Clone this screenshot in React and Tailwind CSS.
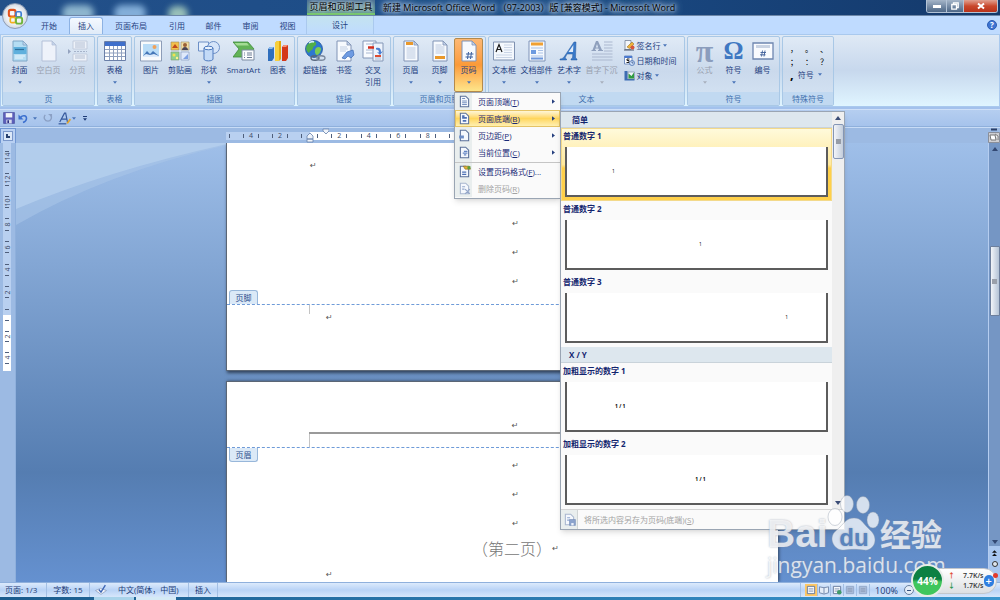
import React from 'react';

/* ---------- icons ---------- */

function Svg({ size = 22, children }) {
  return (
    <svg viewBox="0 0 22 22" width={size} height={size} fill="none" aria-hidden="true">
      {children}
    </svg>
  );
}

// sheet with a folded corner, shared by most of the icons
function Sheet({ fill = '#f7fafe', stroke = '#8093b5', x = 0 }) {
  return (
    <g transform={`translate(${x} 0)`}>
      <path d="M4 1h10l4 4v16H4z" fill={fill} stroke={stroke} />
      <path d="M14 1v4h4z" fill="#c4d3ea" stroke={stroke} strokeWidth=".8" />
    </g>
  );
}

const icons = {
  cover: (
    <Svg>
      <Sheet fill="#b5ddf3" stroke="#7fa6c6" />
      <path d="M4.500 7h13v7h-13z" fill="#5fb0dd" />
      <path d="M6 9.500h9" stroke="#2c6f9c" strokeWidth="1.200" />
      <path d="M6 16h10M6 18h8" stroke="#e9f6fd" />
    </Svg>
  ),
  blank: <Svg><Sheet stroke="#b3c0d8" fill="#eef2fa" /></Svg>,
  pageBreak: (
    <Svg>
      <path d="M6 1h14v8H6zM6 14h14v7H6z" fill="#eef2f9" stroke="#c1cbdc" />
      <path d="M8 3h10M8 5h10M8 7h10M8 16h10M8 18h10" stroke="#b4c0d4" />
      <path d="M1 9l3 2.500-3 2.500z" fill="#94a3bf" />
      <path d="M7 11.500h13" stroke="#a6b3ca" strokeDasharray="2 1" />
    </Svg>
  ),
  table: (
    <Svg>
      <path d="M.5 1.500h21v19H.5z" fill="#fff" stroke="#6a7fa8" />
      <path d="M1 2h20v4H1z" fill="#3f6fcb" />
      <path d="M1 9.500h20M1 13h20M1 16.500h20M5.500 6v14M9.500 6v14M13.500 6v14M17.500 6v14" stroke="#8fa0bf" />
    </Svg>
  ),
  picture: (
    <Svg>
      <path d="M.5 1h21v20H.5z" fill="#f8fafc" stroke="#8d9db8" />
      <path d="M3 4h16v13H3z" fill="#b9dcf7" />
      <circle cx="14.500" cy="7" r="2" fill="#f0a25a" />
      <path d="M3 16l4-5 3 3 3-3 6 5z" fill="#4577b8" />
      <path d="M3 16l3-2 4 1 4-1 5 2v1H3z" fill="#dceafa" />
    </Svg>
  ),
  clipart: (
    <Svg>
      <path d="M2 2h8v8H2z" fill="#f2c04c" stroke="#9c8a63" strokeWidth=".6" />
      <path d="M3 8l3-4 3 4z" fill="#bf4a1e" />
      <path d="M12 2h8v8h-8z" fill="#f3dfa5" stroke="#9c8a63" strokeWidth=".6" />
      <circle cx="16" cy="5" r="2" fill="#9a6038" />
      <path d="M13 10c0-4 6-4 6 0z" fill="#4a4455" />
      <path d="M2 12h8v8H2z" fill="#8fcf8b" stroke="#7e9b76" strokeWidth=".6" />
      <circle cx="5" cy="15" r="1.500" fill="#f4e14d" />
      <circle cx="8" cy="18" r="1.200" fill="#fff28c" />
      <path d="M12 12h8v8h-8z" fill="#dfe9fb" stroke="#7f93b8" strokeWidth=".6" />
      <path d="M14 19l5-5v5z" fill="#7ea1e4" />
    </Svg>
  ),
  shapes: (
    <Svg>
      <path d="M.5 2h10v9H.5z" fill="#e4eefb" stroke="#6c8fc6" />
      <circle cx="15.500" cy="7.500" r="6" fill="#d5e4f9" stroke="#6c8fc6" />
      <path d="M6 8v11c0 2.500 9 2.500 9 0V8" fill="#c3daf7" stroke="#4c78bd" />
      <ellipse cx="10.500" cy="8" rx="4.500" ry="1.800" fill="#e9f2fd" stroke="#4c78bd" />
    </Svg>
  ),
  smartart: (
    <Svg>
      <path d="M0 2h15l6 7-6 8H0l6-8z" fill="#62b357" stroke="#3d8a3b" strokeWidth=".8" />
      <path d="M1.500 3H14l2 2.500H4z" fill="#a3dc94" />
      <path d="M9 10h12v10H9z" fill="#fbfcfe" stroke="#7d8ca3" />
      <path d="M11 13h1M14 13h5M11 15h1M14 15h5M11 17.500h1M14 17.500h5" stroke="#6d7c95" />
    </Svg>
  ),
  chart: (
    <Svg>
      <path d="M1 9l2-2h4v11l-2 3H1z" fill="#2f6fbd" />
      <path d="M1 9l2-2h4l-2 2z" fill="#8cbcf0" />
      <path d="M8 3l2-2h4v18l-2 2H8z" fill="#e5a90d" />
      <path d="M8 3l2-2h2v20H8z" fill="#f8cf3c" />
      <path d="M15 7l2-2h4v13l-2 3h-4z" fill="#d4391b" />
      <path d="M15 7l2-2h4l-2 2z" fill="#f79277" />
    </Svg>
  ),
  hyperlink: (
    <Svg>
      <circle cx="10" cy="9" r="8.500" fill="#2d78d0" stroke="#23549a" strokeWidth=".8" />
      <path d="M4 4c3-3 7-3 8-1 1 3-3 3-3 5s-3 2-4 5C2 11 1 7 4 4z" fill="#50ae49" />
      <path d="M12 8c2-2 5-1 5 1s-2 6-4 6-3-5-1-7z" fill="#7acb55" />
      <path d="M5 3c2-1.500 4-1.500 5-1" stroke="#d4efff" strokeWidth="1.500" />
      <ellipse cx="11" cy="18" rx="4" ry="2.200" stroke="#56657c" strokeWidth="1.400" />
      <ellipse cx="17" cy="18" rx="4" ry="2.200" stroke="#7a899e" strokeWidth="1.400" />
    </Svg>
  ),
  bookmark: (
    <Svg>
      <Sheet />
      <path d="M7 7h7M7 9h8M7 11h6" stroke="#c2cfe3" />
      <path d="M9 18l5-6 6-2 1 5-3 3-3-2-3 3z" fill="#6e9be2" stroke="#3c6cb5" strokeWidth=".7" />
    </Svg>
  ),
  crossref: (
    <Svg>
      <path d="M1 1h13v17H1z" fill="#f9fbfe" stroke="#8497b7" />
      <path d="M11 3h10v18H11z" fill="#edf3fc" stroke="#8497b7" />
      <path d="M4 4h8M4 10h7M4 13h7M13 17h6M13 19h6" stroke="#a8b7d0" />
      <path d="M6 7.500h6" stroke="#d32b1a" strokeWidth="2.500" />
      <path d="M13 16h6" stroke="#df4c2f" strokeWidth="2" />
      <path d="M14 8c4-1 5 1 5 4l2-1-3 4-3-3 2 .5c0-2-1-3-3-3z" fill="#4b7fd1" />
    </Svg>
  ),
  header: (
    <Svg>
      <Sheet />
      <path d="M6 3.500h7" stroke="#e9982b" strokeWidth="3" />
      <path d="M6.500 8h9M6.500 10h9M6.500 12h9M6.500 14h9M6.500 16h9M6.500 18h9" stroke="#bccae0" />
    </Svg>
  ),
  footer: (
    <Svg>
      <Sheet />
      <path d="M6.500 5h6M6.500 7h9M6.500 9h9M6.500 11h9M6.500 13h9" stroke="#bccae0" />
      <path d="M6 17.500h10" stroke="#e9982b" strokeWidth="3" />
    </Svg>
  ),
  pageNumber: (
    <Svg>
      <Sheet />
      <path d="M10.500 12l-1 7M13.500 12l-1 7M8 14h7.500M7.500 17H15" stroke="#3a5f9d" />
    </Svg>
  ),
  textbox: (
    <Svg>
      <path d="M.5 2h21v18H.5z" fill="#f4f8fd" stroke="#7f91b0" />
      <path d="M11 5h8M11 7.500h8M3 15h16M3 17.500h16M11 10h8M11 12.500h8" stroke="#c9d4e6" />
      <path d="M3 12l3-7.500L9 12M4 9.500h4" stroke="#1b1b1b" strokeWidth="1.200" />
    </Svg>
  ),
  quickparts: (
    <Svg>
      <path d="M3 1h16v20H3z" fill="#f5f9fe" stroke="#7f93b8" />
      <path d="M5 4h12" stroke="#f0a033" strokeWidth="3" />
      <path d="M5 8h12M12 10.500h5M12 13h5M5 16h12" stroke="#a9c1e6" />
      <path d="M5 10h5v4H5z" fill="#6c9ae0" />
      <path d="M5 18.500h12" stroke="#6d97db" strokeWidth="2" />
    </Svg>
  ),
  wordart: (
    <Svg>
      <path d="M2 19c3 0 4-2 6-5l8-12h2l-.5 16 1.500 1v1h-6v-1l1.500-1 .3-4H9l-2 4 1.500 1v1H2z" fill="#3979c9" stroke="#265a9f" strokeWidth=".5" />
      <path d="M10.500 12h4.500l.4-7z" fill="#dfebf9" />
    </Svg>
  ),
  dropcap: (
    <Svg>
      <path d="M5 1h2l4 9h1v1H7v-1h1L7.500 8.500h-3L4 10h1v1H.5v-1h1zM6 4L4.800 7.500h2.400z" fill="#8fa0bd" fillRule="evenodd" />
      <path d="M13 2h8.500M13 5h8.500M13 8h8.500M13 11h8.500M1 14h20.500M1 17h20.500M1 20h20.500" stroke="#abb8cf" />
    </Svg>
  ),
  numbering: (
    <Svg>
      <path d="M1 3h20v16H1z" fill="#f9fbfe" stroke="#6e86b0" strokeWidth="1.300" />
      <path d="M4 6.500h14" stroke="#c9d3e3" strokeWidth="3" />
      <path d="M10.500 10.500l-1 6M13 10.500l-1 6M8.500 12.500H14M8 14.800h5.500" stroke="#3e5f99" strokeWidth=".9" />
    </Svg>
  ),
  signature: (
    <Svg size={11}>
      <path d="M2 1h12v18H2z" fill="#f3f6fa" stroke="#6f7c94" strokeWidth="1.500" />
      <path d="M0 20h20" stroke="#4b5568" strokeWidth="2" />
      <path d="M6 14L16 4l4 4-9 9z" fill="#efb33a" stroke="#8b621a" />
      <circle cx="17" cy="15" r="4" fill="#d7553a" />
    </Svg>
  ),
  date: (
    <Svg size={11}>
      <path d="M1 2h15v16H1z" fill="#fff" stroke="#5273b0" strokeWidth="1.500" />
      <path d="M1 4h15" stroke="#4b7ad0" strokeWidth="4" />
      <path d="M11 8H6v3h4v4H5" stroke="#222" strokeWidth="2" />
      <circle cx="16" cy="16" r="5" fill="#cfe1fa" stroke="#4168ab" strokeWidth="1.500" />
      <path d="M16 13v3h3" stroke="#26477f" strokeWidth="1.500" />
    </Svg>
  ),
  object: (
    <Svg size={11}>
      <path d="M1 2h6v16h14v3H1z" fill="#3d6db3" />
      <path d="M8 4h13v14H8z" fill="#eef3f9" stroke="#5d7191" />
      <path d="M9 7l6 5 5-7v12H9z" fill="#2f9b41" />
    </Svg>
  ),
};

// small glyphs of the page number menu
function MenuIcon({ kind }) {
  const faded = kind === 'remove' || kind === 'save';
  const stroke = faded ? '#a9b7cf' : '#5b7099';
  return (
    <Svg size={13}>
      <path d="M4 2h9l5 5v13H4z" fill="#f5f8fd" stroke={stroke} strokeWidth="1.800" />
      {kind === 'top' && <path d="M7 6h5M7 10h8M7 13h8M7 16h8" stroke="#7690c0" strokeWidth="1.800" />}
      {kind === 'bottom' && <path d="M7 7h4M7 10h8M8 15h6" stroke="#4c6fb4" strokeWidth="3" />}
      {kind === 'margin' && <path d="M2 11h8v5H2z" fill="#6d8dc6" />}
      {kind === 'current' && <path d="M10 9h6M8 12h8M10 15h4" stroke="#6485c4" strokeWidth="2" />}
      {kind === 'format' && (
        <>
          <path d="M9 2h10l2 5h-9z" fill="#e5b436" stroke="#8f6a1a" />
          <path d="M16 2h5v5h-5z" fill="#5a9c3c" />
          <path d="M7 12h7M7 16h7" stroke="#4c6fb4" strokeWidth="2" />
        </>
      )}
      {kind === 'remove' && <path d="M7 8h5M7 12h4M12 12l8 8M20 12l-8 8" stroke="#93a6c9" strokeWidth="2" />}
      {kind === 'save' && (
        <>
          <path d="M7 8h5M7 12h4" stroke="#8ea5cf" strokeWidth="2" />
          <path d="M11 11h10v10H11z" fill="#8ba3cd" stroke="#7189b5" />
          <path d="M14 17h4v4h-4z" fill="#eef3fb" />
        </>
      )}
    </Svg>
  );
}

function Caret({ className = 'text-[#4a74b8]' }) {
  return (
    <svg viewBox="0 0 6 4" width="4" height="3" className={className} aria-hidden="true">
      <path d="M0 0h6L3 4z" fill="currentColor" />
    </svg>
  );
}

/* ---------- title bar and tabs ---------- */

function OfficeButton() {
  return (
    <button aria-label="Office" className="absolute left-[2px] top-[3px] z-20 flex size-[26px] items-center justify-center rounded-full border border-[#8d9cb4] bg-radial from-white via-[#eceff4] to-[#b4bdcb]">
      <svg viewBox="0 0 20 20" width="19" height="19" fill="none" aria-hidden="true">
        <rect x="3" y="3" width="7" height="7" rx="2" stroke="#e2531d" strokeWidth="2.200" />
        <rect x="10.500" y="5" width="5.500" height="5.500" rx="1.500" stroke="#3f7fd3" strokeWidth="1.800" />
        <rect x="4.500" y="11" width="5.500" height="5.500" rx="1.500" stroke="#f2b01e" strokeWidth="1.800" />
        <rect x="10.500" y="11" width="6.500" height="6.500" rx="2" stroke="#6fb43b" strokeWidth="2" />
      </svg>
    </button>
  );
}

function TitleBar() {
  return (
    <header className="relative flex h-4 shrink-0 items-start overflow-hidden border-b border-[#6d87a8] bg-linear-to-r from-[#235089] via-[#1b4c87] to-[#14396b]">
      {/* desktop icons showing through the glass */}
      <span className="absolute left-[62px] top-[5px] h-4 w-8 rounded-full bg-[#a9cfe0]/80 blur-[3px]" />
      <span className="absolute left-[114px] top-[5px] h-4 w-8 rounded-full bg-[#9cc7ee]/80 blur-[3px]" />
      <span className="absolute left-[168px] top-[6px] h-4 w-5 rounded-full bg-[#b6dcc4]/80 blur-[3px]" />
      <div className="relative ml-[307px] flex h-[15px] w-[68px] shrink-0 items-center justify-center border-b-2 border-[#74c46a] bg-linear-to-b from-[#4a6f94] to-[#5b9488] pb-px text-[9px] leading-none text-black">
        <span className="whitespace-nowrap [text-shadow:0_0_4px_#e6eef5,0_0_4px_#e6eef5]">页眉和页脚工具</span>
      </div>
      <h1 className="relative ml-2 whitespace-nowrap text-[9px] leading-[15px] text-black [text-shadow:0_0_3px_#b9cde4,0_0_5px_#b9cde4,0_0_8px_#b9cde4,0_0_8px_#b9cde4]">
        新建 Microsoft Office Word （97-2003）版 [兼容模式] - Microsoft Word
      </h1>
      <div className="relative ml-auto mr-[2px] flex h-[13px] overflow-hidden rounded-b-[3px] border border-t-0 border-[#b3c3d6]">
        <button aria-label="最小化" className="flex w-5 items-center justify-center border-r border-[#b3c3d6] bg-linear-to-b from-[#a5b5c8] to-[#4d6787]">
          <span className="h-[3px] w-2 bg-white" />
        </button>
        <button aria-label="还原" className="flex w-[17px] items-center justify-center border-r border-[#b3c3d6] bg-linear-to-b from-[#a5b5c8] to-[#4d6787]">
          <svg viewBox="0 0 8 8" width="8" height="8" fill="none" stroke="#fff" strokeWidth="1.300" aria-hidden="true">
            <path d="M2.500 2V.8h4.700v4.700H6M.8 2.500h4.700v4.700H.8z" />
          </svg>
        </button>
        <button aria-label="关闭" className="flex w-[33px] items-center justify-center bg-linear-to-b from-[#e0a090] via-[#c9482c] to-[#b8321a]">
          <svg viewBox="0 0 8 8" width="8" height="8" stroke="#fff" strokeWidth="2" aria-hidden="true">
            <path d="M1 1.500l6 5M7 1.500l-6 5" />
          </svg>
        </button>
      </div>
    </header>
  );
}

const tabs = [
  { name: '开始', width: 'w-10' },
  { name: '插入', width: 'w-[34px]', active: true },
  { name: '页面布局', width: 'w-14' },
  { name: '引用', width: 'w-9' },
  { name: '邮件', width: 'w-[37px]' },
  { name: '审阅', width: 'w-[37px]' },
  { name: '视图', width: 'w-[37px]' },
];

function Tabs() {
  return (
    <nav className="flex h-[18px] shrink-0 items-end bg-[#bfdbff] pl-[29px] text-[8px] leading-none text-[#1f3f80]">
      {tabs.map((tab) => (
        <button
          key={tab.name}
          className={`${tab.width} h-[17px] ${tab.active ? 'rounded-t-[3px] border border-b-0 border-[#8db2e3] bg-linear-to-b from-[#f4f9ff] to-[#e0ebf8]' : ''}`}
        >
          {tab.name}
        </button>
      ))}
      <button className="h-[18px] w-[68px] border-x border-[#aac9ee] bg-linear-to-b from-[#c4e3ef] to-[#bfdbff]">设计</button>
      <button aria-label="帮助" className="mb-1 ml-auto mr-[3px] flex size-[10px] items-center justify-center rounded-full border border-[#2d5db3] bg-[#3d74d2] text-[8px] font-bold leading-none text-white">
        ?
      </button>
    </nav>
  );
}

/* ---------- ribbon ---------- */

function Group({ label, className, children }) {
  return (
    <section className={`${className} flex h-[70px] shrink-0 flex-col rounded-[2px] border border-[#a9c8e6] bg-linear-to-b from-[#e0eaf6] via-[#cad9ec] to-[#d6e5f4]`}>
      <div className="flex grow justify-center pt-px">{children}</div>
      <h2 className="h-[13px] bg-[#c1d9f1] text-center text-[8px] leading-[13px] text-[#3f70ae]">{label}</h2>
    </section>
  );
}

function RibbonButton({ icon, label, width = 'w-[29px]', menu, disabled, active }) {
  const state = active
    ? 'border-[#b48a4c] bg-linear-to-b from-[#fdb873] via-[#fb9a38] to-[#fde58a]'
    : 'border-transparent';
  return (
    <button
      disabled={disabled}
      className={`${width} ${state} flex h-[54px] shrink-0 flex-col items-center rounded-[2px] border pt-px text-[8px] leading-3 ${disabled ? 'text-[#98a0ae]' : 'text-[#1f417f]'}`}
    >
      <span className="mb-0.5 flex h-[22px] items-center justify-center">{icon}</span>
      {label.split('\n').map((line) => (
        <span key={line} className="whitespace-nowrap">{line}</span>
      ))}
      {menu && <span className="flex h-3 items-center"><Caret className={disabled ? 'text-[#a8b0bd]' : 'text-[#4a74b8]'} /></span>}
    </button>
  );
}

function SmallButton({ icon, label, menu }) {
  return (
    <button className="flex h-[15px] items-center gap-0.5 whitespace-nowrap text-[8px] leading-none text-[#1f417f]">
      {icon}
      {label}
      {menu && <Caret />}
    </button>
  );
}

function Ribbon() {
  return (
    <div className="flex h-[73px] shrink-0 gap-[2px] border border-[#a9c9ee] bg-linear-to-b from-[#dfe9f5] via-[#c7d8ed] to-[#e0f5ff] pl-px pt-px">
      <Group label="页" className="w-[93px]">
        <RibbonButton icon={icons.cover} label="封面" menu />
        <RibbonButton icon={icons.blank} label="空白页" disabled />
        <RibbonButton icon={icons.pageBreak} label="分页" disabled />
      </Group>
      <Group label="表格" className="w-[35px]">
        <RibbonButton icon={icons.table} label="表格" menu />
      </Group>
      <Group label="插图" className="w-[161px]">
        <RibbonButton icon={icons.picture} label="图片" />
        <RibbonButton icon={icons.clipart} label="剪贴画" />
        <RibbonButton icon={icons.shapes} label="形状" menu />
        <RibbonButton icon={icons.smartart} label="SmartArt" width="w-10" />
        <RibbonButton icon={icons.chart} label="图表" />
      </Group>
      <Group label="链接" className="w-[94px]">
        <RibbonButton icon={icons.hyperlink} label="超链接" />
        <RibbonButton icon={icons.bookmark} label="书签" />
        <RibbonButton icon={icons.crossref} label={'交叉\n引用'} />
      </Group>
      <Group label="页眉和页脚" className="w-[93px]">
        <RibbonButton icon={icons.header} label="页眉" menu />
        <RibbonButton icon={icons.footer} label="页脚" menu />
        <div className="relative">
          <RibbonButton icon={icons.pageNumber} label="页码" menu active />
          <PageNumberMenu />
        </div>
      </Group>
      <Group label="文本" className="w-[197px]">
        <RibbonButton icon={icons.textbox} label="文本框" menu />
        <RibbonButton icon={icons.quickparts} label="文档部件" width="w-9" menu />
        <RibbonButton icon={icons.wordart} label="艺术字" menu />
        <RibbonButton icon={icons.dropcap} label="首字下沉" width="w-9" menu disabled />
        <div className="ml-1 flex w-[60px] flex-col items-start">
          <SmallButton icon={icons.signature} label="签名行" menu />
          <SmallButton icon={icons.date} label="日期和时间" />
          <SmallButton icon={icons.object} label="对象" menu />
        </div>
      </Group>
      <Group label="符号" className="w-[93px]">
        <RibbonButton icon={<span className="font-['Liberation_Serif',serif] text-[32px] font-bold leading-[20px] text-[#8b9dbd]">π</span>} label="公式" menu disabled />
        <RibbonButton icon={<span className="font-['Liberation_Serif',serif] text-[25px] font-bold leading-[22px] text-[#3f78c2]">Ω</span>} label="符号" menu />
        <RibbonButton icon={icons.numbering} label="编号" />
      </Group>
      <Group label="特殊符号" className="w-[52px]">
        <div className="flex w-full flex-col pl-[5px] pt-1 text-[8px] leading-[13px] text-black">
          <div className="grid grid-cols-3">
            {['，', '。', '、', '；', '：', '？'].map((mark) => (
              <button key={mark} className="pl-0.5 text-left">{mark}</button>
            ))}
          </div>
          <button className="flex items-center gap-1 pl-0.5 text-[#1f417f]">
            <b className="text-[13px] text-black">,</b>符号<Caret />
          </button>
        </div>
      </Group>
    </div>
  );
}

/* ---------- page number menu and gallery ---------- */

const menuItems = [
  { kind: 'top', text: '页面顶端', hotkey: 'T', sub: true },
  { kind: 'bottom', text: '页面底端', hotkey: 'B', sub: true, active: true },
  { kind: 'margin', text: '页边距', hotkey: 'P', sub: true },
  { kind: 'current', text: '当前位置', hotkey: 'C', sub: true },
  { kind: 'format', text: '设置页码格式', hotkey: 'F', tail: '...', divider: true },
  { kind: 'remove', text: '删除页码', hotkey: 'R', disabled: true },
];

function PageNumberMenu() {
  return (
    <div className="absolute left-0 top-full z-30 w-[107px] border border-[#9aa5b3] bg-[#fafafa] pb-px shadow-md">
      <ul className="bg-linear-to-r from-[#e9eeee] from-[17px] to-transparent to-[17px]">
        {menuItems.map((item) => (
          <li key={item.kind} className={item.divider ? 'mt-px border-t border-[#c5c5c5]' : ''}>
            <button
              disabled={item.disabled}
              className={`flex h-[17px] w-full items-center pl-0.5 pr-1 text-[8px] leading-none ${item.active ? 'border border-[#e5c365] bg-linear-to-b from-[#fff6d6] via-[#ffd65c] to-[#fff0b0]' : 'border border-transparent'} ${item.disabled ? 'text-[#a3a3a3]' : 'text-[#1b2a78]'}`}
            >
              <MenuIcon kind={item.kind} />
              <span className="ml-[7px] whitespace-nowrap">
                {item.text}(<u>{item.hotkey}</u>){item.tail}
              </span>
              {item.sub && (
                <svg viewBox="0 0 4 6" width="3" height="5" className="ml-auto" aria-hidden="true">
                  <path d="M0 0v6l4-3z" fill="#27407f" />
                </svg>
              )}
            </button>
          </li>
        ))}
      </ul>
      <Gallery />
    </div>
  );
}

function GalleryHeading({ className, children }) {
  return (
    <h3 className={`${className} h-4 border-b border-[#c9d3da] bg-[#dde7ee] text-[8px] font-bold leading-4 text-[#12246e]`}>
      {children}
    </h3>
  );
}

function GalleryItem({ name, sample, align, bold, active }) {
  return (
    <button className={`flex h-[73px] w-full flex-col border pb-[3px] text-left ${active ? 'border-[#f3d98a] bg-linear-to-b from-[#fffadb] from-0% via-[#ffe99d] via-50% to-[#ffd04a] to-55%' : 'border-transparent'}`}>
      <span className="px-px text-[8px] font-bold leading-[14px] text-[#12246e]">{name}</span>
      <span className={`${align} mx-[3px] mt-1 flex grow items-center self-stretch border-x-2 border-b-2 border-[#5c5c5c] bg-white leading-none text-black ${bold ? 'text-[5px] font-bold' : 'text-[5px]'}`}>
        {sample}
      </span>
    </button>
  );
}

function Gallery() {
  return (
    <div className="absolute left-[105px] top-[18px] w-[285px] border border-[#9aa5b3] bg-[#fafafa] shadow-md">
      <div className="flex">
        <div className="grow">
          <GalleryHeading className="pl-[11px]">简单</GalleryHeading>
          <GalleryItem name="普通数字 1" sample="1" align="justify-start pl-[45px]" active />
          <GalleryItem name="普通数字 2" sample="1" align="justify-center pl-2" />
          <GalleryItem name="普通数字 3" sample="1" align="justify-end pr-[38px]" />
          <GalleryHeading className="pl-2">X / Y</GalleryHeading>
          <GalleryItem name="加粗显示的数字 1" sample="1 / 1" align="justify-start pl-12" bold />
          <GalleryItem name="加粗显示的数字 2" sample="1 / 1" align="justify-center pl-2" bold />
        </div>
        <div className="flex w-3 flex-col items-center bg-[#efefef] py-1">
          <svg viewBox="0 0 6 4" width="6" height="4" aria-hidden="true"><path d="M0 4h6L3 0z" fill="#3b4d76" /></svg>
          <div className="mt-1 flex h-[35px] w-[11px] items-center justify-center rounded-[2px] border border-[#8496b5] bg-linear-to-r from-[#f3f5f9] to-[#c3cddb]">
            <span className="h-[5px] w-[5px] bg-[#969ca6]" />
          </div>
          <svg viewBox="0 0 6 4" width="6" height="4" className="mt-auto" aria-hidden="true"><path d="M0 0h6L3 4z" fill="#3b4d76" /></svg>
        </div>
      </div>
      <button disabled className="flex h-5 w-full items-center border-t border-[#d5d5d5] text-[8px] leading-none text-[#a3a3a3]">
        <span className="flex h-full w-[17px] items-center justify-center border-r border-[#d0d5d5] bg-[#e9eeee]">
          <MenuIcon kind="save" />
        </span>
        <span className="ml-1.5">将所选内容另存为页码(底端)(<u>S</u>)</span>
      </button>
    </div>
  );
}

/* ---------- quick access bar ---------- */

function QuickAccess() {
  return (
    <div className="mt-[2px] flex h-[18px] shrink-0 items-center border-y border-[#8fb0dc] border-t-[#cfe0f8] bg-linear-to-b from-[#b5cef0] to-[#a6c3ec] pl-[3px]">
      <button aria-label="保存">
        <Svg size={12}>
          <path d="M1 1h20v20H1z" fill="#5d5fbb" stroke="#3c3f90" />
          <path d="M5 2h12v8H5z" fill="#f0f3fa" />
          <path d="M6 14h10v7H6z" fill="#d5daec" />
          <path d="M8 15h3v5H8z" fill="#2c2f80" />
        </Svg>
      </button>
      <button aria-label="撤消" className="ml-[3px] flex items-center gap-1">
        <Svg size={11}>
          <path d="M5 9c4-5 12-5 12 2 0 5-4 7-7 8" stroke="#3c70cf" strokeWidth="3" />
          <path d="M1 3v10h10z" fill="#3c70cf" />
        </Svg>
        <Caret />
      </button>
      <button aria-label="恢复" disabled className="ml-[6px]">
        <Svg size={10}>
          <path d="M5 4c-5 6-1 14 6 14s9-8 6-13" stroke="#8ba0c4" strokeWidth="3" />
          <path d="M11 2h9v8z" fill="#8ba0c4" />
        </Svg>
      </button>
      <button aria-label="字体颜色" className="ml-[5px] flex items-center gap-px">
        <Svg size={13}>
          <path d="M3 17L11 2h2l3 15M6 12h9" stroke="#35589c" strokeWidth="2" />
          <path d="M1 20h13" stroke="#35589c" strokeWidth="2" />
          <path d="M14 19l6-8 2 2-5 7z" fill="#e3a52c" />
        </Svg>
        <Caret />
      </button>
      <button aria-label="自定义" className="ml-[7px] flex flex-col items-center gap-px">
        <span className="h-px w-1 bg-[#1f3c77]" />
        <Caret className="text-[#1f3c77]" />
      </button>
    </div>
  );
}

/* ---------- rulers ---------- */

// every fourth step carries a number, odd steps carry a tick
function steps(count) {
  return Array.from({ length: count }, (_, i) => i + 1);
}

function RulerH() {
  const cell = (k) => (
    <span key={k} className="flex flex-1 basis-0 items-center justify-center overflow-visible">
      {k % 4 === 0 && k <= 16 ? k / 2 : k % 2 === 1 && <i className="h-1 w-px bg-[#4f5f7c]" />}
    </span>
  );
  return (
    <div className="relative mx-auto flex h-2 w-[553px] text-[7px] leading-none text-[#3b4a66]">
      <div className="flex w-[84px] flex-row-reverse bg-[#b9d0f0] pr-1">{steps(11).map(cell)}</div>
      <div className="flex grow bg-white pl-1">{steps(63).map(cell)}</div>
      <svg viewBox="0 0 24 16" width="24" height="16" className="absolute -top-1 left-[79px]" aria-hidden="true">
        <path d="M2 11V8l3-3 3 3v3zM2 11h6v3H2z" fill="#eef3fa" stroke="#6580ab" strokeWidth=".8" />
        <path d="M18 1h6v2l-3 3-3-3z" fill="#eef3fa" stroke="#6580ab" strokeWidth=".8" />
      </svg>
    </div>
  );
}

function RulerV() {
  const cell = (k) => (
    <span key={k} className="flex min-h-0 flex-1 basis-0 items-center justify-center">
      {k % 4 === 0 ? <span className="-rotate-90">{k / 2}</span> : k % 2 === 1 && <i className="h-px w-1 bg-[#4f5f7c]" />}
    </span>
  );
  return (
    <div className="flex w-4 shrink-0 flex-col border-r border-[#8fb0dc] bg-[#9cbae3] pl-[3px] text-[7px] leading-none text-[#3b4a66]">
      <div className="flex h-[172px] w-2 flex-col-reverse bg-[#b9d0f0] pb-[3px]">{steps(30).map(cell)}</div>
      <div className="flex h-14 w-2 flex-col bg-white pt-[3px]">{steps(10).map(cell)}</div>
    </div>
  );
}

/* ---------- document ---------- */

function Mark({ className = '' }) {
  return <span className={`${className} font-['DejaVu_Sans',sans-serif] text-[8px] leading-none text-[#555]`}>↵</span>;
}

function Document() {
  return (
    <main className="mx-auto flex w-[552px] flex-col gap-[10px]">
      <article className="flex h-[228px] shrink-0 flex-col border-l border-b border-[#5b6675] bg-white shadow-[1px_2px_3px_#33445e]">
        <div className="flex flex-col pl-[83px] pr-[57px] pt-[19px]">
          <p className="flex h-[58px] items-start"><Mark /></p>
          {[1, 2, 3].map((n) => (
            <p key={n} className="flex h-[29px] items-start justify-center"><Mark /></p>
          ))}
        </div>
        <div className="-mt-[17px] ml-0.5 flex h-[14px] w-[29px] items-center justify-center rounded-t-[3px] border border-b-0 border-[#98b7da] bg-[#dbe9f7] text-[8px] leading-none text-[#2b4d8c]">
          页脚
        </div>
        <div className="border-t border-dashed border-[#6f9bd8] pl-[82px]">
          <div className="h-[9px] border-l border-[#c4c4c4]" />
          <p className="flex pl-[17px]"><Mark /></p>
        </div>
      </article>
      <article className="flex shrink-0 grow flex-col border-l border-t border-[#5b6675] bg-white shadow-[1px_0_3px_#33445e]">
        <div className="ml-[82px] mr-[57px] flex h-[52px] items-end justify-center border-b-2 border-[#9a9a9a] pb-0.5">
          <Mark />
        </div>
        <div className="ml-[82px] h-[13px] border-l border-[#c4c4c4]" />
        <div className="border-t border-dashed border-[#6f9bd8] pl-0.5">
          <div className="flex h-[14px] w-[29px] items-center justify-center rounded-b-[3px] border border-t-0 border-[#98b7da] bg-[#dbe9f7] text-[8px] leading-none text-[#2b4d8c]">
            页眉
          </div>
        </div>
        <div className="flex flex-col pl-[83px] pr-[57px]">
          {[1, 2, 3].map((n) => (
            <p key={n} className="flex h-[29px] items-start justify-center"><Mark /></p>
          ))}
          <p className="-mt-[14px] flex h-[28px] items-center justify-center whitespace-nowrap text-[16px] font-light leading-none text-[#777]">
            （第二页）<Mark />
          </p>
          <p className="mt-2 flex pl-4 leading-none"><Mark /></p>
        </div>
      </article>
    </main>
  );
}

function PageScrollbar() {
  return (
    <div className="flex w-3 shrink-0 flex-col items-center border-l border-[#b5cdf0] bg-[#7596c4] pt-1">
      <svg viewBox="0 0 6 4" width="6" height="4" aria-hidden="true"><path d="M0 4h6L3 0z" fill="#324873" /></svg>
      <div className="mt-[95px] flex h-[70px] w-[10px] items-center justify-center rounded-[1px] border border-[#6d7f9c] bg-linear-to-r from-[#f2f5f9] to-[#b4c3d6]">
        <span className="h-[5px] w-[5px] bg-[#9aa0aa]" />
      </div>
      <svg viewBox="0 0 6 4" width="6" height="4" className="mt-auto" aria-hidden="true"><path d="M0 0h6L3 4z" fill="#324873" /></svg>
      <div className="mt-0.5 flex h-9 w-full flex-col items-center gap-1 bg-[#a8c6ef] pt-1">
        <svg viewBox="0 0 6 8" width="5" height="7" aria-hidden="true"><path d="M0 3h6L3 0zM0 7h6L3 4z" fill="#111" /></svg>
        <span className="size-[6px] rounded-full border border-[#333] bg-[#dfe6ef]" />
      </div>
    </div>
  );
}

function Workspace() {
  return (
    <>
      <div className="flex h-4 shrink-0 items-center border-t border-[#c8dcf6] bg-[#9cbae3]">
        <button aria-label="制表符" className="flex size-4 shrink-0 items-center justify-center border border-[#7096d3] bg-[#b9d0f2]">
          <span className="flex size-[10px] items-center justify-center border border-[#7b98cb] bg-[#dce8f8]">
            <i className="h-1 w-1 border-b-2 border-l-2 border-[#27406f]" />
          </span>
        </button>
        <RulerH />
        <button aria-label="标尺" className="flex h-full w-3 shrink-0 items-end justify-center">
          <svg viewBox="0 0 12 15" width="12" height="15" fill="none" aria-hidden="true">
            <path d="M3 1.500h6" stroke="#2b3f66" strokeWidth="2" />
            <path d="M.5 4.500h11v10H.5z" fill="#cfcfd3" stroke="#8a8f9a" />
            <path d="M2 7h5l1 5H3zM7 6l3 2v4" fill="#fff" stroke="#777" />
          </svg>
        </button>
      </div>
      <div className="relative flex min-h-0 grow overflow-hidden bg-linear-to-b from-[#9fbfe9] from-0% via-[#557db1] via-75% to-[#6591d0] to-100%">
        <RulerV />
        <svg viewBox="0 0 211 82" width="211" height="82" className="absolute left-4 top-0" aria-hidden="true">
          <path d="M0 0h211v2Q90 30 0 82z" fill="#a9c5e8" opacity=".6" />
          <path d="M0 0h211v1Q90 28 0 66z" fill="#b5cfee" opacity=".8" />
        </svg>
        <div className="relative flex min-w-0 grow"><Document /></div>
        <PageScrollbar />
      </div>
    </>
  );
}

/* ---------- status bar ---------- */

function StatusBar() {
  return (
    <footer className="flex h-[15px] shrink-0 items-center border-t border-[#8fb0dc] bg-linear-to-b from-[#dceafc] via-[#b9d3f6] to-[#d6e6fb] text-[8px] leading-none text-[#1c3a75]">
      <button className="h-full w-[47px] whitespace-nowrap border-r border-[#a3bfe4] pl-[5px] text-left">页面: 1/3</button>
      <button className="h-full w-[43px] whitespace-nowrap border-r border-[#a3bfe4]">字数: 15</button>
      <button aria-label="校对" className="ml-[5px] mr-[11px]">
        <Svg size={12}>
          <path d="M1 12l9-4 11 4-10 7z" fill="#f3f5fa" stroke="#7485a5" />
          <path d="M7 10l4 5L19 2" stroke="#3b64b5" strokeWidth="2.500" />
        </Svg>
      </button>
      <button className="h-full w-[71px] whitespace-nowrap border-r border-[#a3bfe4] text-left">中文(简体，中国)</button>
      <button className="h-full w-[29px] border-r border-[#a3bfe4]">插入</button>
      <div className="ml-auto flex h-full items-center border-l border-[#a3bfe4] pl-1">
        {[0, 1, 2, 3, 4].map((n) => (
          <button
            key={n}
            aria-label={`视图 ${n + 1}`}
            className={`flex h-3 w-[13px] items-center justify-center border-r border-[#a3bfe4] ${n === 0 ? 'bg-[#fdc765]' : ''}`}
          >
            <Svg size={10}>
              {n === 1 ? (
                <path d="M1 4l10 2 10-2v13l-10 3-10-3zM11 6v13" fill="#e4ecf7" stroke="#6f84a8" strokeWidth="2" />
              ) : (
                <path d="M3 3h16v16H3z" fill={n > 2 ? '#a9bcd9' : '#f4f7fb'} stroke={n > 2 ? '#93a8ca' : '#64779b'} strokeWidth="2" />
              )}
              {n !== 1 && <path d="M6 8h10M6 11h10M6 14h10" stroke="#8797b4" strokeWidth="1.500" />}
              {n === 2 && <circle cx="16" cy="16" r="5" fill="#3f9a6a" />}
            </Svg>
          </button>
        ))}
        <button className="ml-[5px] text-[9px]">100%</button>
        <button aria-label="缩小" className="ml-[6px] mr-[86px] flex size-[10px] items-center justify-center rounded-full border border-[#68809f] bg-[#e4ecf7]">
          <span className="h-px w-1 bg-[#34507f]" />
        </button>
      </div>
    </footer>
  );
}

/* ---------- overlays ---------- */

function Watermark() {
  return (
    <div className="pointer-events-none absolute bottom-[18px] right-[55px] z-40 h-[88px] w-[178px] whitespace-nowrap text-white/75 [text-shadow:0_0_2px_#7f8ca0aa]">
      <div className="flex h-[58px] items-end font-['Liberation_Sans','Noto_Sans_CJK_SC',sans-serif] leading-none">
        <span className="w-[59px] text-[39px] font-bold leading-[36px]">Bai</span>
        <svg viewBox="0 0 54 58" width="54" height="58" className="shrink-0" aria-hidden="true">
          <g fill="#fff" fillOpacity=".75" stroke="#8d99aa" strokeOpacity=".4">
            <ellipse cx="9" cy="23" rx="7" ry="8.500" />
            <ellipse cx="21" cy="10" rx="6.500" ry="8.500" />
            <ellipse cx="37" cy="11" rx="6.500" ry="8.500" />
            <ellipse cx="47" cy="26" rx="6" ry="8" />
            <path d="M28 24c7 0 9 5 13 9s8 7 8 13-5 11-11 10-14-1-20 0S6 51 6 45s4-8 8-12 7-9 14-9z" />
          </g>
          <text x="28" y="52" textAnchor="middle" fontSize="24" fontWeight="bold" fill="#5a84bd" fontFamily="Liberation Sans, sans-serif">du</text>
        </svg>
        <span className="text-[31px] font-bold leading-[32px]">经验</span>
      </div>
      <p className="text-[21px] leading-[26px]">jingyan.baidu.com</p>
    </div>
  );
}

function NetMeter() {
  return (
    <div className="absolute bottom-[3px] right-[3px] z-50 flex items-center text-[7px] font-semibold leading-[10px] text-[#333]">
      <div className="z-10 -mr-[17px] flex size-[33px] items-center justify-center rounded-full border-2 border-[#e6ece8] bg-linear-to-b from-[#0c8043] from-45% to-[#3fc65c] to-55% text-[10px] font-bold text-white">
        44%
      </div>
      <div className="flex h-[26px] w-[70px] items-center rounded-full border border-[#c3c7cc] bg-linear-to-b from-white to-[#dcdfe2] pl-5 pr-0.5">
        <div className="grow">
          <p className="flex gap-2"><span className="text-[#e04a2b]">↑</span>7.7K/s</p>
          <p className="flex gap-2"><span className="text-[#23954a]">↓</span>1.7K/s</p>
        </div>
        <button aria-label="加速" className="relative flex size-3 items-center justify-center rounded-full bg-[#2f7ee0] text-[11px] leading-none text-white">
          +
          <span className="absolute -right-1 -top-0.5 size-[5px] rounded-full bg-[#e33a2c]" />
        </button>
      </div>
    </div>
  );
}

function App() {
  return (
    <div className="relative flex h-screen flex-col overflow-hidden bg-[#a3c1ec] font-['Open_Sans','Noto_Sans_CJK_SC',sans-serif]">
      <OfficeButton />
      <TitleBar />
      <Tabs />
      <Ribbon />
      <QuickAccess />
      <Workspace />
      <StatusBar />
      {/* top edge of the taskbar */}
      <div className="flex h-[3px] shrink-0 bg-linear-to-r from-[#1b5c8e] to-[#3a96cf] pl-[94px]">
        <span className="w-10 bg-[#a9d3ea]" />
        <span className="ml-0.5 w-10 bg-[#d5eaf6]" />
      </div>
      <Watermark />
      <NetMeter />
    </div>
  );
}

export default App;
